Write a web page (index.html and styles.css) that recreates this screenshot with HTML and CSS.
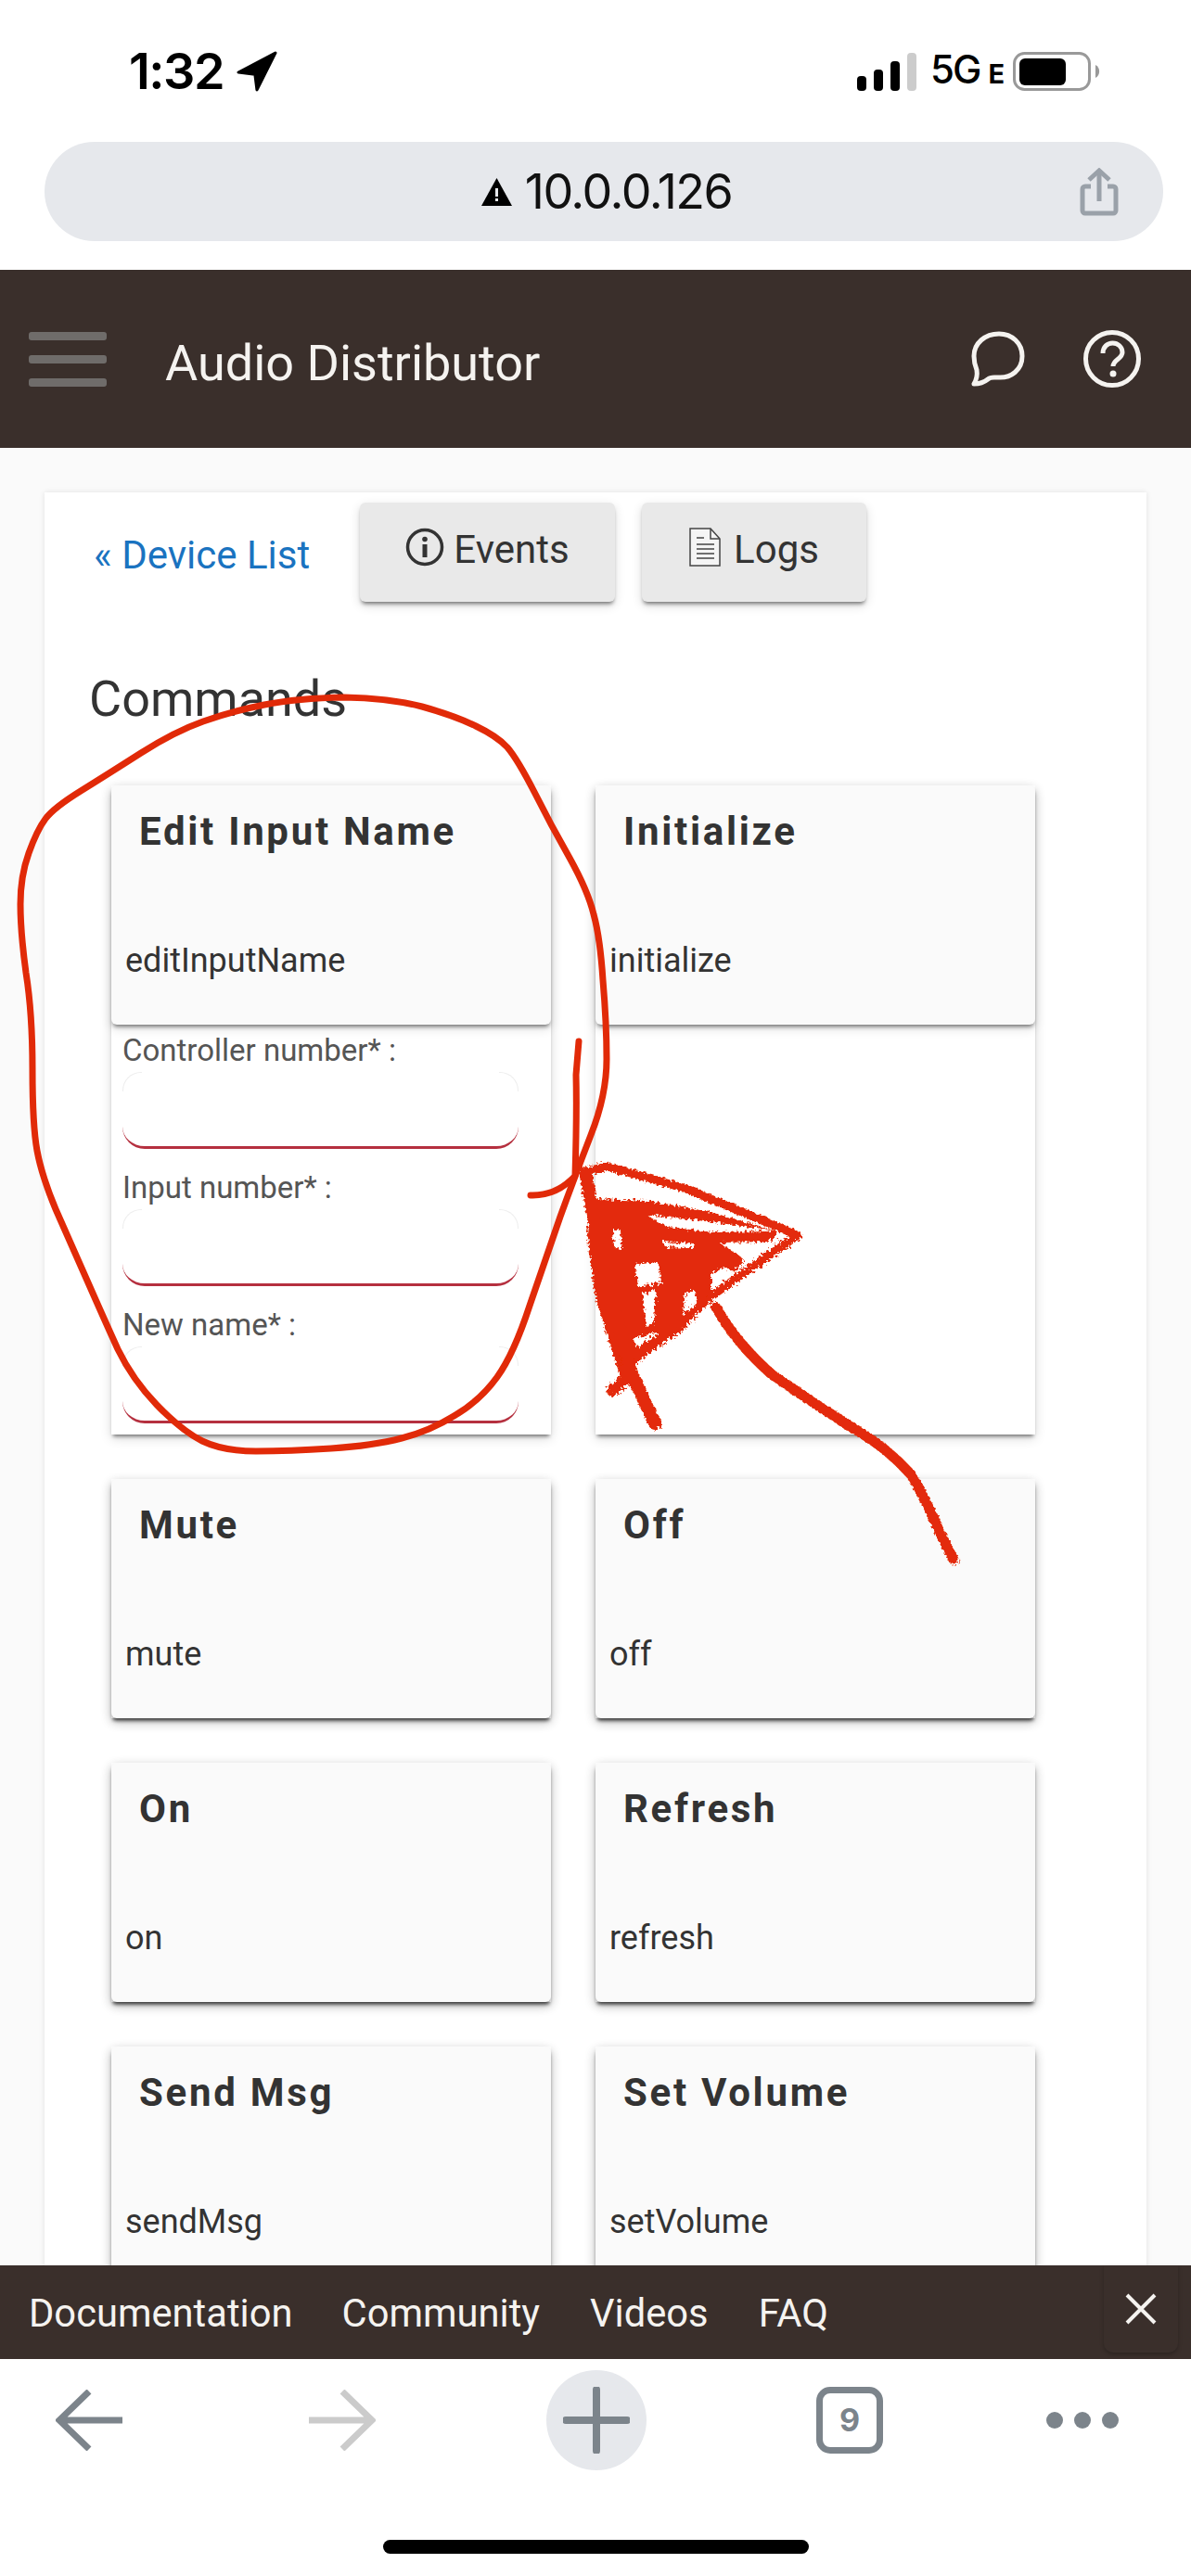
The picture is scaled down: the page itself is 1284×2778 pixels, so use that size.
FILE: index.html
```html
<!DOCTYPE html>
<html lang="en">
<head>
<meta charset="utf-8">
<title>Audio Distributor</title>
<link rel="stylesheet" href="styles.css">
</head>
<body>
<div class="phone">
  <div class="chrome">
    <div class="status">
      <div class="status-left">
        <span class="time">1:32</span>
        <svg class="loc" viewBox="0 0 42 42"><path d="M40 2 L2 22 L19 24 L21 40 Z" fill="#000" stroke="#000" stroke-width="3" stroke-linejoin="round"/></svg>
      </div>
      <div class="status-right">
        <div class="signal"><i class="b1"></i><i class="b2"></i><i class="b3"></i><i class="b4"></i></div>
        <span class="net">5G<b>E</b></span>
        <svg class="batt" viewBox="0 0 94 42"><rect x="1.5" y="1.5" width="81" height="39" rx="11" fill="none" stroke="#999" stroke-width="3"/><rect x="7" y="7" width="50" height="29" rx="6" fill="#000"/><path d="M89 14 a8 8 0 0 1 0 14 Z" fill="#999"/></svg>
      </div>
    </div>
    <div class="urlbar">
      <div></div>
      <div class="addr">
        <svg class="warn" viewBox="0 0 33 30"><path d="M16.500 0 L33 30 H0 Z" fill="#000"/><rect x="15" y="11" width="3" height="9" fill="#e6e8ec"/><rect x="15" y="22" width="3" height="3" fill="#e6e8ec"/></svg>
        <span>10.0.0.126</span>
      </div>
      <svg class="share" viewBox="0 0 42 52"><g fill="none" stroke="#9aa1a9" stroke-width="5"><path d="M12 20 H6 a3 3 0 0 0 -3 3 V46 a3 3 0 0 0 3 3 H36 a3 3 0 0 0 3 -3 V23 a3 3 0 0 0 -3 -3 H30"/><path d="M21 36 V3"/><path d="M10 13 L21 3 L32 13"/></g></svg>
    </div>
  </div>

  <header class="appbar">
    <div class="burger"><i></i><i></i><i></i></div>
    <div class="apptitle">Audio Distributor</div>
    <div class="appicons">
      <svg class="ico-chat" viewBox="0 0 58 60"><path d="M30 3 C44 3 55 13 55 27 C55 42 43 51 29 50 C24 50 21 49 18 52 C13 56 8 57 3 57 C6 52 7 48 6 42 C4 37 3 32 3 27 C3 13 15 3 30 3 Z" fill="none" stroke="#f5f3f0" stroke-width="5" stroke-linejoin="round"/></svg>
      <svg class="ico-help" viewBox="0 0 62 62"><circle cx="31" cy="31" r="28.500" fill="none" stroke="#f5f3f0" stroke-width="5"/><path d="M21 25 C21 18 26 14 31.500 14 C37 14 42 18 42 24 C42 31 32 32 32 39" fill="none" stroke="#f5f3f0" stroke-width="5"/><circle cx="32" cy="47" r="3.500" fill="#f5f3f0"/></svg>
    </div>
  </header>

  <main class="page">
    <section class="panel">
      <nav class="tools">
        <a class="back">« Device List</a>
        <div class="btn btn-events">
          <svg class="btn-ico" viewBox="0 0 42 42"><circle cx="21" cy="21" r="18.500" fill="none" stroke="#333" stroke-width="3.500"/><circle cx="21" cy="12.500" r="2.800" fill="#333"/><rect x="18.500" y="18" width="5" height="14" fill="#333"/></svg>
          <span>Events</span>
        </div>
        <div class="btn btn-logs">
          <svg class="btn-ico doc" viewBox="0 0 34 42"><path d="M1 1 H23 L33 12 V41 H1 Z" fill="#f5f5f5" stroke="#444" stroke-width="1.500"/><path d="M23 1 V12 H33" fill="none" stroke="#444" stroke-width="1.500"/><path d="M8 11 H16 M8 18 H27 M8 23 H27 M8 28 H27 M8 33 H27" stroke="#444" stroke-width="1.500"/></svg>
          <span>Logs</span>
        </div>
      </nav>
      <h2 class="section">Commands</h2>
      <div class="grid">
        <article class="cell">
          <div class="head"><h3>Edit Input Name</h3><p>editInputName</p></div>
          <form class="form">
            <label>Controller number* :</label><div class="field"></div>
            <label>Input number* :</label><div class="field"></div>
            <label>New name* :</label><div class="field"></div>
          </form>
        </article>
        <article class="cell"><div class="head"><h3>Initialize</h3><p>initialize</p></div></article>
        <article class="cell"><div class="head"><h3>Mute</h3><p>mute</p></div></article>
        <article class="cell"><div class="head"><h3>Off</h3><p>off</p></div></article>
        <article class="cell"><div class="head"><h3>On</h3><p>on</p></div></article>
        <article class="cell"><div class="head"><h3>Refresh</h3><p>refresh</p></div></article>
        <article class="cell"><div class="head"><h3>Send Msg</h3><p>sendMsg</p></div></article>
        <article class="cell"><div class="head"><h3>Set Volume</h3><p>setVolume</p></div></article>
      </div>
    </section>
  </main>

  <footer class="banner">
    <a class="l1">Documentation</a><a class="l2">Community</a><a class="l3">Videos</a><a class="l4">FAQ</a>
    <div class="close">
      <svg viewBox="0 0 36 36"><path d="M3 3 L33 33 M33 3 L3 33" stroke="#f5f3f0" stroke-width="4"/></svg>
    </div>
  </footer>

  <div class="toolbar">
    <svg class="tb-arrow" viewBox="0 0 72 66"><path d="M36 2 L4 33 L36 64 M4 33 H72" fill="none" stroke="#7c848b" stroke-width="7"/></svg>
    <svg class="tb-arrow fwd" viewBox="0 0 72 66"><path d="M36 2 L68 33 L36 64 M68 33 H0" fill="none" stroke="#cbcbcb" stroke-width="7"/></svg>
    <div class="plus"><svg viewBox="0 0 72 72"><path d="M36 3 V69 M3 36 H69" stroke="#7c848b" stroke-width="8" stroke-linecap="round"/></svg></div>
    <div class="tabs">9</div>
    <div class="dots"><i></i><i></i><i></i></div>
  </div>
  <div class="homebar"><i></i></div>

  <svg class="ink" viewBox="0 0 1284 2778">
    <defs>
      <filter id="crayon" x="-10%" y="-10%" width="120%" height="120%">
        <feTurbulence type="fractalNoise" baseFrequency="0.35" numOctaves="2" seed="4"/>
        <feDisplacementMap in="SourceGraphic" scale="9"/>
      </filter>
    </defs>
    <g fill="none" stroke="#e12a08" stroke-width="7" stroke-linecap="round" stroke-linejoin="round">
      <path d="M371 752 Q420 753 455 762 Q491 772 513 783 Q536 794 547 806 Q558 819 576 854 Q594 890 614 925 Q634 961 640 986 Q647 1011 650 1057 Q654 1104 654 1142 Q654 1181 637 1224 Q620 1268 604 1312 Q589 1356 571 1408 Q554 1460 536 1485 Q518 1510 491 1526 Q464 1543 433 1551 Q402 1559 357 1562 Q312 1565 276 1565 Q241 1565 218 1554 Q196 1543 169 1515 Q143 1488 127 1455 Q112 1422 94 1381 Q76 1340 60 1304 Q45 1268 40 1241 Q35 1214 35 1153 Q35 1093 28 1049 Q22 1005 22 975 Q22 945 31 920 Q40 895 49 883 Q58 871 87 853 Q116 835 152 812 Q188 789 219 778 Q250 767 285 760 Q321 753 371 752"/>
      <path d="M572 1289 Q600 1290 620 1268 Q622 1200 621 1159 L624 1123"/>
    </g>
    <g filter="url(#crayon)" stroke-linecap="round" stroke-linejoin="round">
      <path d="M640 1296 L700 1298 L765 1310 L835 1330 L800 1358 L775 1385 L735 1432 L690 1462 L672 1485 L645 1400 L636 1330 Z" fill="#e32c08" stroke="#e32c08" stroke-width="6"/>
      <g fill="#fff" stroke="#fff" stroke-width="2">
        <path d="M662 1328 L668 1327 L669 1346 L663 1345 Z"/>
        <path d="M686 1365 L708 1362 L712 1382 L688 1387 Z"/>
        <path d="M694 1396 L706 1392 L704 1426 L697 1430 Z"/>
        <path d="M740 1396 L748 1392 L752 1416 L736 1422 Z"/>
        <path d="M768 1374 L782 1368 L790 1372 L768 1396 Z"/>
        <path d="M778 1341 L826 1340 L805 1360 L796 1352 Z"/>
        <path d="M700 1311 L760 1318 L830 1327 L770 1328 L720 1322 Z"/>
        <path d="M716 1340 L748 1342 L745 1345 L718 1344 Z"/>
        <path d="M684 1444 L708 1438 L686 1452 Z"/>
      </g>
      <g fill="none" stroke="#e32c08">
        <path d="M628 1264 L655 1258 L740 1282 L860 1332 L772 1394 L690 1462" stroke-width="9"/>
        <path d="M632 1268 L645 1345 L665 1420 L680 1480 L706 1535" stroke-width="14"/>
        <path d="M680 1482 L660 1500" stroke-width="12"/>
        <path d="M772 1410 Q795 1450 833 1483 Q880 1515 921 1541 Q955 1560 982 1590 Q1000 1620 1012 1650 L1028 1682" stroke-width="11"/>
      </g>
    </g>
  </svg>
</div>
</body>
</html>
```
FILE: styles.css
```css
* { box-sizing: border-box; }
html, body { margin: 0; padding: 0; background: #fff; }
.phone {
  position: relative;
  width: 1284px;
  height: 2778px;
  overflow: hidden;
  display: flex;
  flex-direction: column;
  font-family: Roboto, "Liberation Sans", sans-serif;
  color: #333;
}

/* iOS chrome */
.chrome { height: 291px; flex: none; background: #fff; padding-top: 54px; }
.status { height: 46px; display: flex; align-items: center; justify-content: space-between; padding: 0 98px 0 139px; }
.status-left { display: flex; align-items: center; gap: 14px; }
.time { font-family: Inter, sans-serif; font-weight: 600; font-size: 54px; line-height: 46px; letter-spacing: -1.500px; color: #000; }
.loc { width: 44px; height: 44px; }
.status-right { display: flex; align-items: center; }
.signal { display: flex; align-items: flex-end; gap: 8px; height: 42px; margin-right: 15px; }
.signal i { display: block; width: 10px; border-radius: 4px; background: #000; }
.signal .b1 { height: 16px; }
.signal .b2 { height: 23px; }
.signal .b3 { height: 32px; }
.signal .b4 { height: 41px; background: #ccc; }
.net { font-family: Inter, sans-serif; font-weight: 500; font-size: 42px; line-height: 46px; letter-spacing: -2px; color: #000; margin-right: 9px; }
.net b { font-size: 29px; font-weight: 700; margin-left: 9px; letter-spacing: 0; }
.batt { width: 94px; height: 42px; }

.urlbar {
  margin: 53px 30px 0 48px;
  height: 107px;
  border-radius: 54px;
  background: #e6e8ec;
  display: grid;
  grid-template-columns: 1fr auto 1fr;
  align-items: center;
  padding: 0 48px 0 54px;
}
.addr { display: flex; align-items: center; gap: 14px; font-family: Inter, sans-serif; font-size: 52px; letter-spacing: -1.500px; color: #111; }
.warn { width: 33px; height: 30px; }
.share { width: 42px; height: 52px; justify-self: end; }

/* App header */
.appbar { height: 192px; flex: none; background: #3a2f2b; display: flex; align-items: center; padding: 0 54px 0 31px; }
.burger { width: 84px; display: flex; flex-direction: column; gap: 16px; }
.burger i { display: block; height: 9px; border-radius: 3px; background: #6f6c6a; }
.apptitle { margin: 10px 0 0 63px; font-size: 54px; color: #f5f3f0; line-height: 60px; }
.appicons { margin-left: auto; display: flex; align-items: center; gap: 63px; }
.ico-chat { width: 58px; height: 60px; }
.ico-help { width: 62px; height: 62px; }

/* Page */
.page { flex: 1; min-height: 0; overflow: hidden; background: #fafafa; padding: 48px 48px 0; }
.panel { background: #fff; box-shadow: 0 0 6px rgba(0, 0, 0, .1); padding-top: 11px; min-height: 2000px; }
.tools { display: flex; align-items: flex-start; padding-left: 53px; }
.back { width: 231px; margin-right: 56px; margin-top: 33px; font-size: 42px; line-height: 48px; color: #1a73c0; white-space: nowrap; }
.btn {
  height: 107px;
  border-radius: 6px;
  background: #e9e9e9;
  display: flex;
  align-items: flex-start;
  justify-content: center;
  padding-top: 27px;
  gap: 10px;
  font-size: 42px;
  line-height: 48px;
  color: #333;
  box-shadow: 0 4px 4px -2px rgba(0, 0, 0, .5), 0 4px 12px rgba(0, 0, 0, .14);
}
.btn-events { width: 275px; margin-right: 29px; }
.btn-logs { width: 242px; gap: 14px; }
.btn-ico { width: 42px; height: 42px; flex: none; }
.doc { width: 34px; }

.section { margin: 75px 0 0 48px; font-size: 54px; font-weight: 400; line-height: 60px; color: #333; }

.grid { margin: 63px 0 0 72px; display: grid; grid-template-columns: 474px 474px; gap: 48px; }
.cell { background: #fff; box-shadow: 0 4px 4px -2px rgba(0, 0, 0, .5), 0 4px 12px rgba(0, 0, 0, .14); }
.head { height: 258px; border-radius: 6px; background: #fafafa; padding: 26px 0 0 15px; box-shadow: 0 4px 4px -2px rgba(0, 0, 0, .5), 0 4px 12px rgba(0, 0, 0, .14); }
.head h3 { margin: 0 0 0 15px; font-size: 42px; font-weight: 700; line-height: 48px; letter-spacing: 2.700px; color: #333; }
.head p { margin: 93px 0 0; font-size: 36px; line-height: 44px; color: #333; }

.form { display: flex; flex-direction: column; padding: 8px 35px 12px 12px; }
.form label { font-size: 33px; line-height: 40px; color: #555; }
.field {
  position: relative;
  height: 83px;
  margin: 3px 0 22px;
  border-bottom: 3px solid #b5303f;
  border-radius: 24px;
}
.field:last-child { margin-bottom: 0; }
.field::before, .field::after {
  content: "";
  position: absolute;
  top: 0;
  width: 20px;
  height: 20px;
  border-top: 1px solid #eee;
}
.field::before { left: 0; border-left: 1px solid #eee; border-top-left-radius: 20px; }
.field::after { right: 0; border-right: 1px solid #eee; border-top-right-radius: 20px; }

/* Banner */
.banner { position: relative; height: 101px; flex: none; background: #3a2f2b; color: #f5f3f0; display: flex; align-items: center; font-size: 41.700px; padding: 2px 0 0 31px; }
.banner a { white-space: nowrap; }
.l1 { margin-right: 53px; }
.l2 { margin-right: 54px; }
.l3 { margin-right: 54px; }
.close {
  position: absolute;
  top: 0;
  right: 14px;
  width: 80px;
  height: 94px;
  border-radius: 0 0 10px 10px;
  display: flex;
  align-items: center;
  justify-content: center;
  box-shadow: 0 2px 4px rgba(0, 0, 0, .25);
}
.close svg { width: 36px; height: 36px; }

/* Toolbar */
.toolbar { flex: none; height: 120px; padding: 12px 78px 0 60px; display: flex; align-items: center; background: #fff; }
.tb-arrow { width: 72px; height: 66px; flex: none; }
.fwd { margin-left: 201px; }
.plus { width: 108px; height: 108px; margin-left: 184px; border-radius: 50%; background: #e6e8ec; display: flex; align-items: center; justify-content: center; flex: none; }
.plus svg { width: 72px; height: 72px; }
.tabs { width: 72px; height: 72px; margin-left: 183px; border: 7px solid #7c848b; border-radius: 15px; color: #7c848b; font-family: Inter, sans-serif; font-weight: 700; font-size: 34px; line-height: 58px; text-align: center; flex: none; }
.dots { margin-left: auto; display: flex; gap: 12px; }
.dots i { display: block; width: 18px; height: 18px; border-radius: 50%; background: #7c848b; }
.homebar { flex: none; height: 114px; display: flex; justify-content: center; align-items: flex-end; padding-bottom: 24px; background: #fff; }
.homebar i { display: block; width: 459px; height: 15px; border-radius: 8px; background: #000; }

/* Hand-drawn annotation */
.ink { position: absolute; left: 0; top: 0; width: 1284px; height: 2778px; pointer-events: none; }
```
